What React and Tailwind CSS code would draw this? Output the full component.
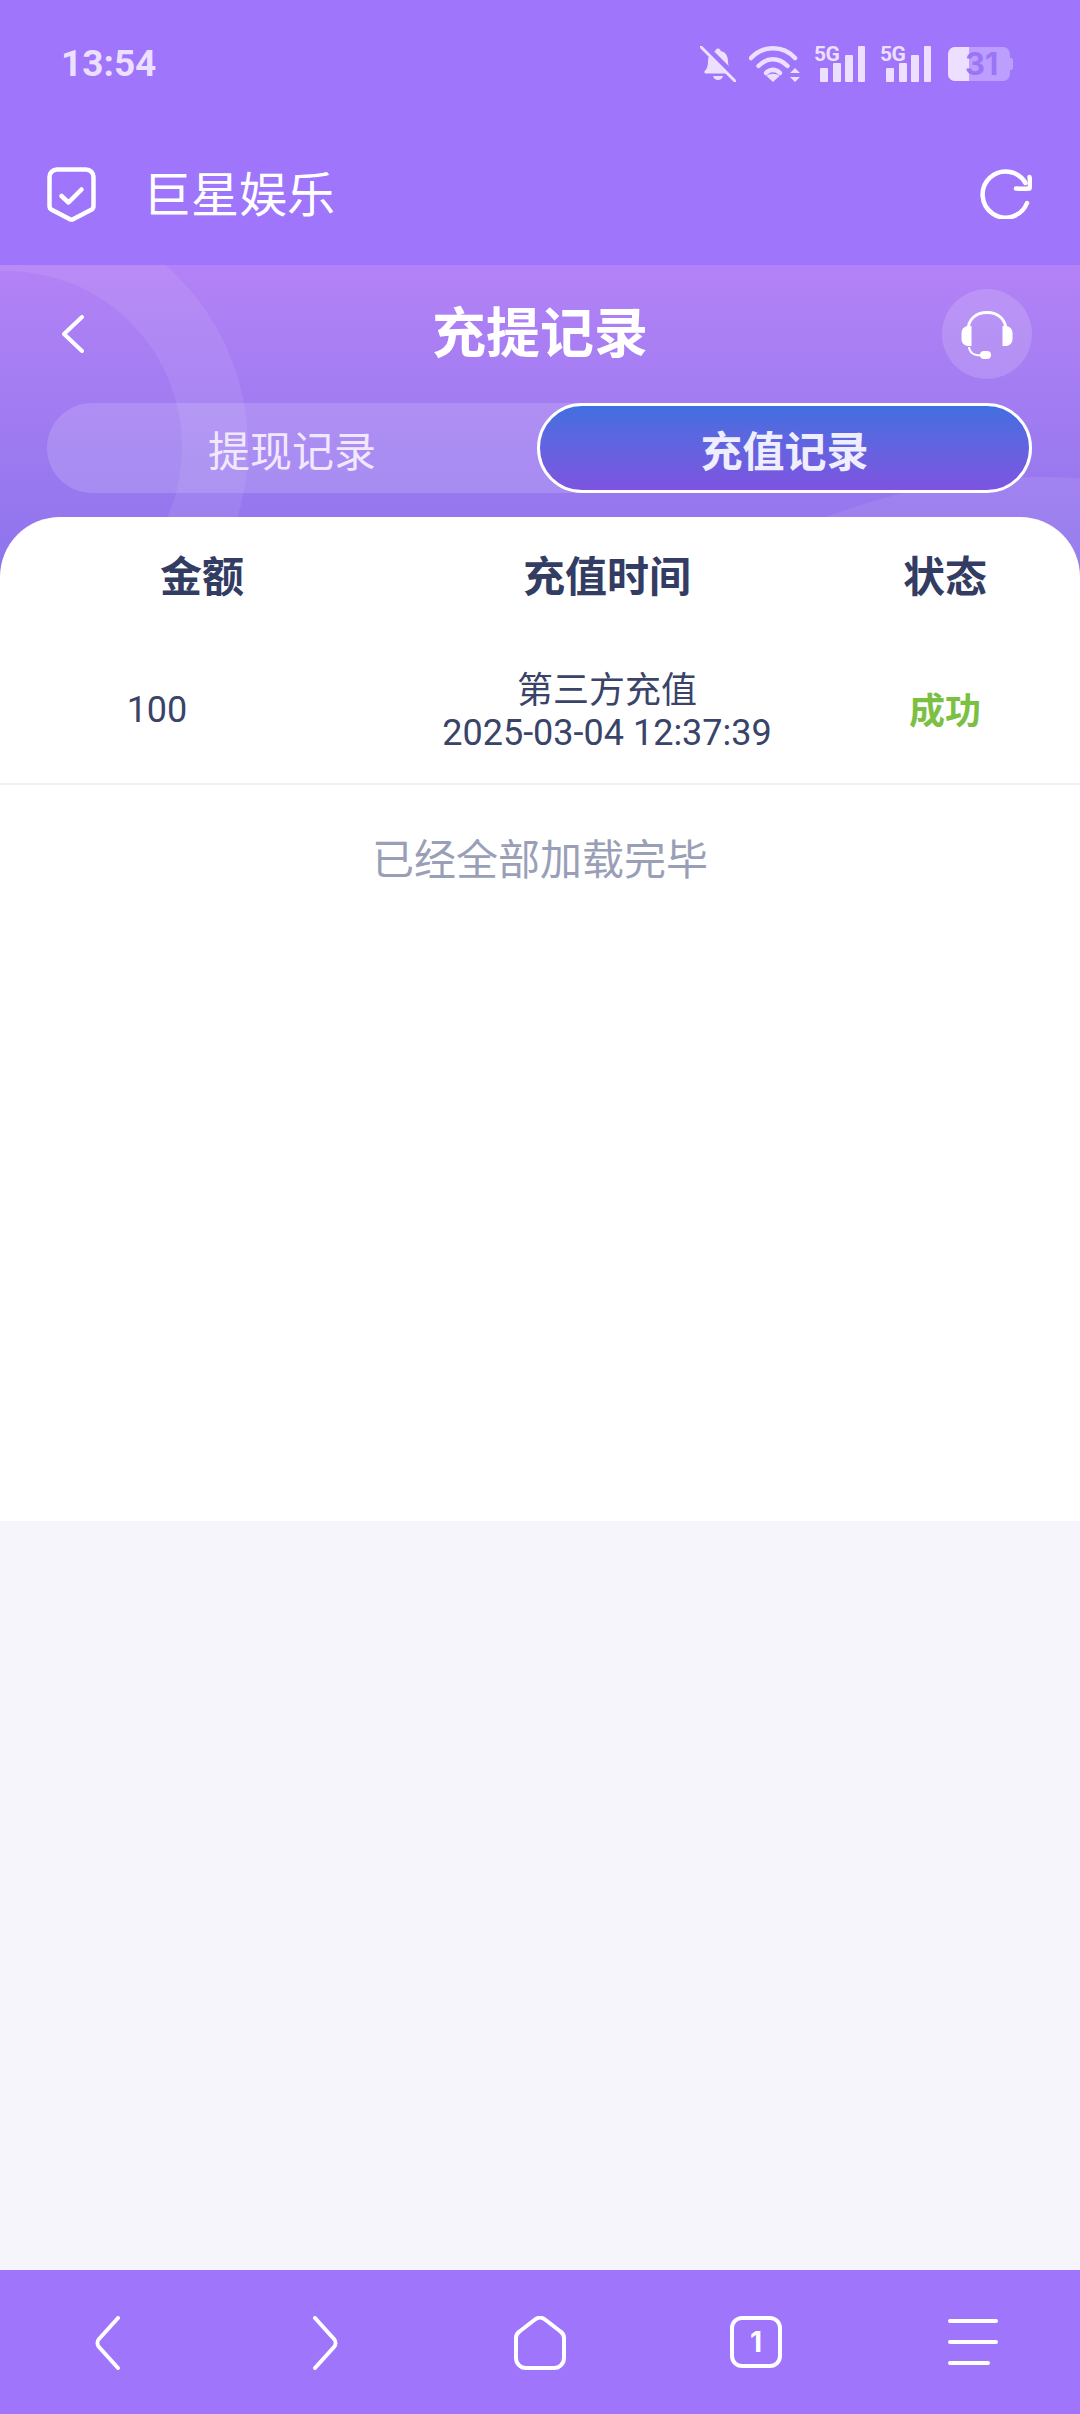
const cjk = { fontFamily: '"Noto Sans CJK SC", "Noto Sans", sans-serif' };

// Status bar glyphs
const BellOff = () => (
  <svg width="36" height="36" viewBox="0 0 36 36" fill="#ecdfff">
    <path d="M18 2.500a2.600 2.600 0 0 1 2.600 2.600c5 1.100 7.400 5 7.400 10 0 4.200 1 7 3.600 9.600.8 1 .8 2.800-1.200 2.800H6.200c-2 0-2.400-1.800-1.200-2.800C7 22.600 8 20 8 15.500c0-5.200 2.600-9.300 7.400-10.400A2.600 2.600 0 0 1 18 2.500z" />
    <path d="M13 30h10c-.6 2.500-2.600 4-5 4s-4.400-1.500-5-4z" />
    <path d="M0 0l36 36" stroke="#9f75fc" strokeWidth="6" transform="translate(2 -2.500)" />
    <path d="M1 1l34 34" stroke="#ecdfff" strokeWidth="3" strokeLinecap="round" />
  </svg>
);

const Wifi = () => (
  <svg width="52" height="36" viewBox="0 0 52 36" fill="none" stroke="#ecdfff" strokeWidth="4.500" strokeLinecap="round">
    <path d="M2 12C14-1 34-1 46 12" />
    <path d="M9.500 20c9-9 20-9 29 0" />
    <path d="M17 27c4.500-4 9.500-4 14 0" />
    <path d="M24 36l-6.500-6c3.500-3 9.500-3 13 0z" fill="#ecdfff" stroke="none" />
    <path d="M46 22l5 5H41zM46 36l5-5H41z" fill="#ecdfff" stroke="none" />
  </svg>
);

const Signal = () => (
  <div className="relative w-[51px] h-[36px]">
    <span className="absolute left-0 top-[-4px] text-[21px] leading-[24px] font-bold text-[#ecdfff] tracking-[-0.5px]" style={{ fontFamily: 'Roboto, sans-serif' }}>5G</span>
    <svg className="absolute left-0 top-0" width="51" height="36" viewBox="0 0 51 36" fill="#ecdfff">
      <rect x="6" y="22" width="8" height="14" rx="1" />
      <rect x="19" y="17" width="8" height="19" rx="1" />
      <rect x="31" y="9" width="8" height="27" rx="1" />
      <rect x="44" y="0" width="7" height="36" rx="1" />
    </svg>
  </div>
);

const Battery = () => (
  <div className="relative w-[65px] h-[34px]">
    <div className="absolute left-0 top-0 w-[62px] h-[34px] rounded-[7px] bg-[#bc9eff]" />
    <div className="absolute right-0 top-[11px] w-[3px] h-[12px] rounded-r-[2px] bg-[#bc9eff]" />
    <div className="absolute left-0 top-0 w-[21px] h-[34px] rounded-l-[7px] bg-[#ecdfff]" />
    <span className="absolute left-[17px] top-0 text-[31px] leading-[34px] font-bold text-[#9c74f6]" style={{ fontFamily: 'Inter, sans-serif' }}>31</span>
  </div>
);

const Shield = () => (
  <svg width="49" height="55" viewBox="0 0 49 55" fill="none" stroke="#fff" strokeWidth="4.500" strokeLinejoin="round" strokeLinecap="round">
    <path d="M10 2.500h29a7.500 7.500 0 0 1 7.500 7.500v29c0 1.800-.8 3-2.200 3.800L26.500 52a4 4 0 0 1-4 0L4.700 42.800C3.300 42 2.500 40.800 2.500 39V10A7.500 7.500 0 0 1 10 2.500z" />
    <path d="M14.500 29l7 6.500 13-13" />
  </svg>
);

const Refresh = () => (
  <svg width="52" height="50" viewBox="0 0 52 50" fill="none" stroke="#fff" strokeWidth="4.500" strokeLinecap="round" strokeLinejoin="round">
    <path d="M47 34a23 23 0 1 1-1.500-20" />
    <path d="M36 19.500c5 .5 9 .5 13.500 0 .8-4 .8-7.500 0-11.500" />
  </svg>
);

const Headset = () => (
  <svg width="52" height="48" viewBox="0 0 52 48" fill="none">
    <path d="M7 20C7 8 15 1.500 26 1.500S45 8 45 20" stroke="#fff" strokeWidth="3" />
    <path d="M10.500 15v20H7a6.500 6.500 0 0 1-6.500-6.500v-7A6.500 6.500 0 0 1 7 15z" fill="#fff" />
    <path d="M41.500 15v20H45a6.500 6.500 0 0 0 6.500-6.500v-7A6.500 6.500 0 0 0 45 15z" fill="#fff" />
    <path d="M8 36c.500 6 4 8.500 12 8.500" stroke="#fff" strokeWidth="2" />
    <rect x="19" y="40" width="11" height="8" rx="4" fill="#fff" />
  </svg>
);

// Bottom browser toolbar
const toolbarStroke = { fill: 'none', stroke: '#fff', strokeWidth: 4, strokeLinecap: 'round', strokeLinejoin: 'round' };

const BackArrow = () => (
  <svg width="26" height="54" viewBox="0 0 26 54" {...toolbarStroke}>
    <path d="M23 2L4 23a6 6 0 0 0 0 8l19 21" />
  </svg>
);

const ForwardArrow = () => (
  <svg width="26" height="54" viewBox="0 0 26 54" {...toolbarStroke}>
    <path d="M3 2l19 21a6 6 0 0 1 0 8L3 52" />
  </svg>
);

const Home = () => (
  <svg width="52" height="54" viewBox="0 0 52 54" {...toolbarStroke}>
    <path d="M21 3.500a8 8 0 0 1 10 0l15.500 12A8 8 0 0 1 50 21.500V42a10 10 0 0 1-10 10H12A10 10 0 0 1 2 42V21.500a8 8 0 0 1 3.500-6z" />
  </svg>
);

const TabCount = () => (
  <div className="flex items-center justify-center w-[52px] h-[52px] rounded-[12px] border-[4px] border-white text-white text-[28px] font-bold" style={{ fontFamily: 'Inter, sans-serif' }}>1</div>
);

const Menu = () => (
  <div className="flex flex-col gap-[17px] w-[50px]">
    <div className="h-[4px] w-[50px] rounded-full bg-white" />
    <div className="h-[4px] w-[50px] rounded-full bg-white" />
    <div className="h-[4px] w-[42px] rounded-full bg-white" />
  </div>
);

const App = () => {
  return (
    <div className="w-[1080px] h-[2414px] flex flex-col bg-[#f5f5fb] overflow-hidden" style={cjk}>
      {/* Status bar */}
      <div className="h-[128px] bg-[#9f75fc] flex items-center justify-between pl-[61px] pr-[67px]">
        <span className="text-[37px] font-bold text-[#ecdfff]" style={{ fontFamily: 'Roboto, sans-serif' }}>13:54</span>
        <div className="flex items-center">
          <BellOff />
          <div className="ml-[13px]"><Wifi /></div>
          <div className="ml-[13px]"><Signal /></div>
          <div className="ml-[15px]"><Signal /></div>
          <div className="ml-[17px]"><Battery /></div>
        </div>
      </div>

      {/* App bar */}
      <div className="h-[137px] pb-[5px] bg-[#9f75fc] flex items-center pl-[47px] pr-[48px]">
        <Shield />
        <span className="ml-[47px] mb-[6px] text-[48px] leading-none text-white">巨星娱乐</span>
        <div className="ml-auto"><Refresh /></div>
      </div>

      {/* Page header with tabs */}
      <div className="relative overflow-hidden bg-gradient-to-b from-[#b382f6] to-[#8d74ec] pt-[24px] pb-[84px]">
        <div className="absolute left-[-236px] top-[-60px] w-[484px] h-[484px] rounded-full border-[66px] border-white/8" />
        <div className="absolute left-[448px] top-[212px] w-[1184px] h-[1184px] rounded-full bg-white/8" />

        <div className="relative h-[90px] mx-[48px] grid grid-cols-[1fr_auto_1fr] items-center">
          <svg className="ml-[14px]" width="22" height="38" viewBox="0 0 22 38" fill="none" stroke="#fff" strokeWidth="4" strokeLinecap="round" strokeLinejoin="round">
            <path d="M20 2L2 19l18 17" />
          </svg>
          <span className="text-[54px] leading-none font-bold text-white mb-[8px]">充提记录</span>
          <div className="justify-self-end w-[90px] h-[90px] rounded-full bg-white/15 flex items-center justify-center pt-[2px]">
            <Headset />
          </div>
        </div>

        <div className="relative mt-[24px] ml-[47px] mr-[48px] flex h-[90px] rounded-full bg-white/15">
          <div className="w-[490px] flex items-center justify-center text-[42px] text-[#f1e8ff]">提现记录</div>
          <div className="flex-1 flex items-center justify-center rounded-full border-[3px] border-white bg-gradient-to-b from-[#3f6fe0] to-[#7d54e0] text-[42px] font-bold text-[#eeeeff]">充值记录</div>
        </div>
      </div>

      {/* Record list */}
      <div className="relative -mt-[60px] h-[1004px] bg-white rounded-t-[60px]">
        <div className="grid grid-cols-[404px_406px_270px] pt-[27px] h-[120px] text-[42px] leading-[60px] font-bold text-[#333c63] text-center">
          <div>金额</div>
          <div>充值时间</div>
          <div>状态</div>
        </div>
        <div className="grid grid-cols-[404px_406px_270px] items-center h-[148px] border-b-2 border-[#f2f2f6] text-center text-[#3a4368]">
          <div className="pr-[90px] text-[36px]" style={{ fontFamily: 'Roboto, sans-serif' }}>100</div>
          <div className="text-[36px] leading-[42px] pt-[3px]" style={{ fontFamily: 'Roboto, "Noto Sans CJK SC", sans-serif' }}>
            <div>第三方充值</div>
            <div>2025-03-04 12:37:39</div>
          </div>
          <div className="text-[36px] font-bold text-[#7cc043] mb-[5px]">成功</div>
        </div>
        <div className="pt-[44px] text-center text-[42px] leading-[56px] text-[#9a9fb8]">已经全部加载完毕</div>
      </div>

      <div className="flex-1" />

      {/* Browser toolbar */}
      <div className="h-[144px] bg-[#9f75fc] relative pt-[46px] flex items-start">
        <div className="ml-[95px]"><BackArrow /></div>
        <div className="ml-[191px]"><ForwardArrow /></div>
        <div className="ml-[176px]"><Home /></div>
        <div className="ml-[164px]"><TabCount /></div>
        <div className="ml-[166px] mt-[3px]"><Menu /></div>
      </div>
    </div>
  );
};

export default App;
